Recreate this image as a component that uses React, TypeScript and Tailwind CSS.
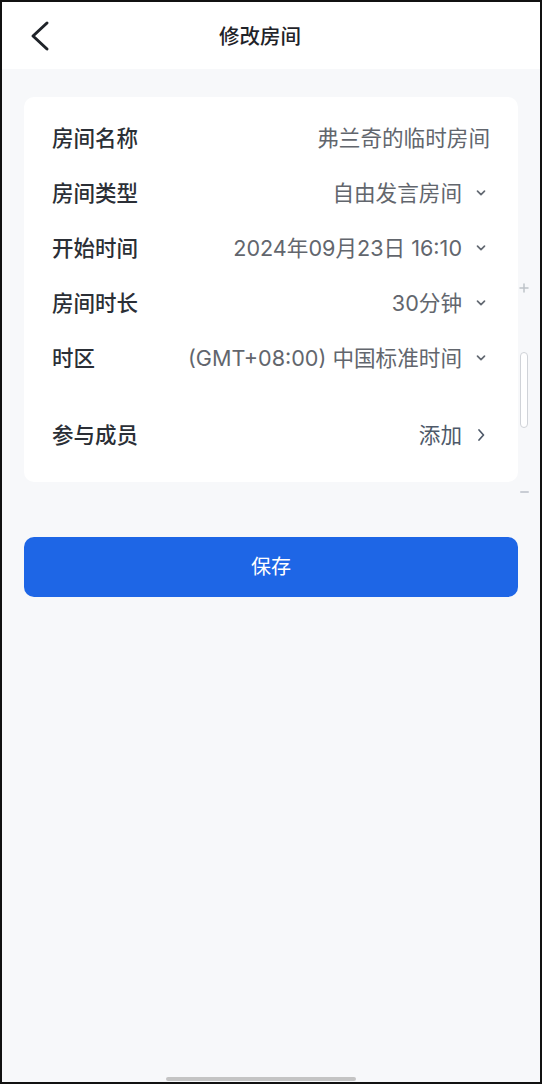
const rows = [
  { label: '房间名称', value: '弗兰奇的临时房间', arrow: false },
  { label: '房间类型', value: '自由发言房间', arrow: true },
  { label: '开始时间', value: '2024年09月23日 16:10', arrow: true },
  { label: '房间时长', value: '30分钟', arrow: true },
  { label: '时区', value: '(GMT+08:00) 中国标准时间', arrow: true },
];

function ArrowDown() {
  return (
    <svg width="14" height="14" viewBox="0 0 14 14" className="ml-[12px] shrink-0">
      <path d="M3.5 5.2 L7 8.7 L10.5 5.2" fill="none" stroke="#646a73" strokeWidth="1.7" strokeLinecap="round" strokeLinejoin="round" />
    </svg>
  );
}

function ArrowRight() {
  return (
    <svg width="14" height="14" viewBox="0 0 14 14" className="ml-[12px] shrink-0">
      <path d="M5 2 L9.5 7 L5 12" fill="none" stroke="#4e5969" strokeWidth="1.7" strokeLinecap="round" strokeLinejoin="round" />
    </svg>
  );
}

export default function App() {
  return (
    <div
      className="relative h-[1084px] w-[542px] border-2 border-[#111] bg-[#f7f8fa] flex flex-col overflow-hidden"
      style={{ fontFamily: 'Inter, "Noto Sans CJK SC", sans-serif' }}
    >
      <header className="h-[67px] bg-white grid grid-cols-[60px_1fr_82px] items-center shrink-0">
        <svg width="24" height="32" viewBox="0 0 24 32" className="ml-[26px]">
          <path d="M19 3 L5 16 L19 29" fill="none" stroke="#1f2329" strokeWidth="3" strokeLinecap="round" strokeLinejoin="round" />
        </svg>
        <h1 className="mt-[3px] text-center text-[20.5px] font-medium text-[#1f2329]">修改房间</h1>
        <div />
      </header>

      <main className="flex-1 px-[22px] pt-[28px]">
        <div className="bg-white rounded-[10px] px-[28px] pt-[14px] pb-[19px]">
          {rows.map((r) => (
            <div key={r.label} className="h-[55px] flex items-center justify-between">
              <span className="text-[21.5px] font-medium text-[#2b2f36] shrink-0">{r.label}</span>
              <div className={`flex items-center ${r.arrow ? 'mr-[2px]' : ''}`}>
                <span className="text-[21.6px] text-[#62666d] whitespace-nowrap">{r.value}</span>
                {r.arrow && <ArrowDown />}
              </div>
            </div>
          ))}
          <div className="h-[55px] mt-[22px] flex items-center justify-between">
            <span className="text-[21.5px] font-medium text-[#2b2f36]">参与成员</span>
            <div className="flex items-center mr-[2px]">
              <span className="text-[21.6px] text-[#4e5969]">添加</span>
              <ArrowRight />
            </div>
          </div>
        </div>

        <button className="mt-[55px] w-full h-[60px] rounded-[10px] bg-[#1e66e6] text-white text-[20px]">
          保存
        </button>
      </main>

      {/* page scrollbar overlay */}
      <div className="absolute right-[11px] top-[281px] flex flex-col items-center">
        <svg width="10" height="10" viewBox="0 0 10 10">
          <path d="M5 1 V9 M1 5 H9" stroke="#bfc3c9" strokeWidth="1.5" strokeLinecap="round" />
        </svg>
        <div className="mt-[59px] w-[8px] h-[76px] rounded-full border border-[#d0d3d8] bg-white" />
        <div className="mt-[63px] w-[9px] h-[2px] rounded-full bg-[#c9cdd4]" />
      </div>

      <div className="absolute left-[164px] bottom-[1px] w-[190px] h-[4px] rounded-full bg-[#c4c4c4]" />
    </div>
  );
}
